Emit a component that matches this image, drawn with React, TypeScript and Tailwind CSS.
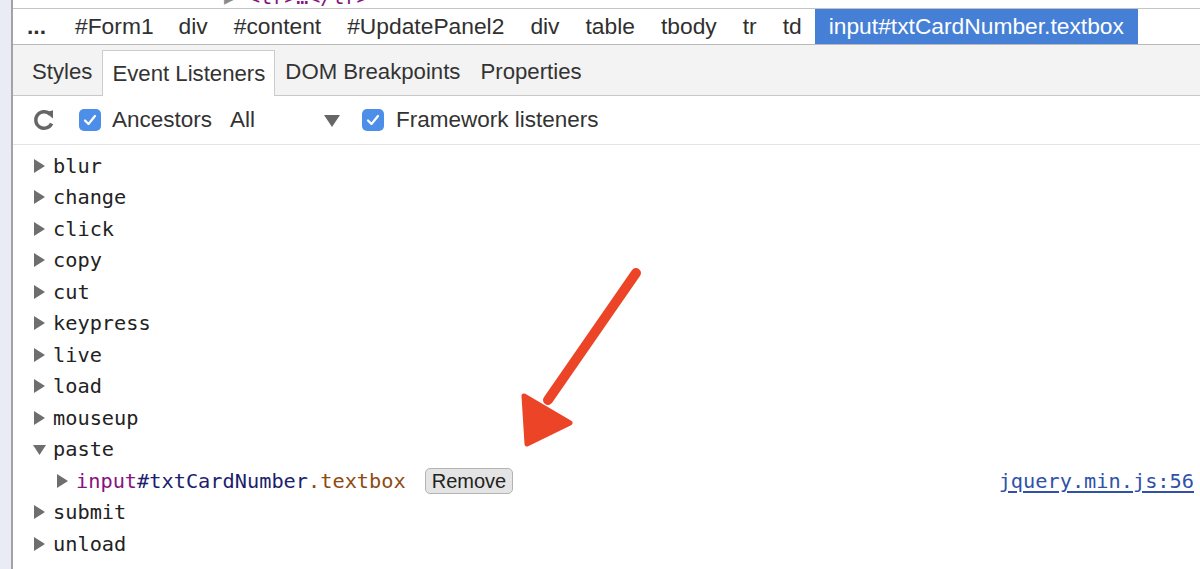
import React from "react";

const sans = { fontFamily: '"Liberation Sans", Arial, sans-serif' };
const mono = { fontFamily: '"DejaVu Sans Mono", "Liberation Mono", monospace' };

const crumbs = ["...", "#Form1", "div", "#content", "#UpdatePanel2", "div", "table", "tbody", "tr", "td"];
const tabs = ["Styles", "Event Listeners", "DOM Breakpoints", "Properties"];
const events = ["blur", "change", "click", "copy", "cut", "keypress", "live", "load", "mouseup"];

const Tri: React.FC<{ open?: boolean }> = ({ open }) => (
  <svg width="13" height="14" viewBox="0 0 13 14" className="shrink-0">
    {open ? (
      <polygon points="0,3 13,3 6.5,13" fill="#6e6e6e" />
    ) : (
      <polygon points="1,0 12,7 1,14" fill="#6e6e6e" />
    )}
  </svg>
);

const Check: React.FC = () => (
  <div className="w-[22px] h-[22px] rounded-[5px] bg-[#4c8ee8] flex items-center justify-center shrink-0">
    <svg width="14" height="12" viewBox="0 0 14 12">
      <path d="M2 6.5 L5.5 10 L12 2" fill="none" stroke="white" strokeWidth="2.2" strokeLinecap="round" strokeLinejoin="round" />
    </svg>
  </div>
);

const EventRow: React.FC<{ name: string; open?: boolean }> = ({ name, open }) => (
  <div className="h-[31.5px] flex items-center pl-[20px] gap-[7px]">
    <Tri open={open} />
    <span>{name}</span>
  </div>
);

const App: React.FC = () => {
  return (
    <div className="w-[1200px] h-[569px] flex bg-white overflow-hidden relative text-[#222]">
      {/* left gutter */}
      <div className="w-[13px] bg-[#e9ebf5] border-r-2 border-[#a3a3a3] shrink-0" />

      <div className="flex-1 flex flex-col min-w-0">
        {/* clipped line of the elements tree above */}
        <div className="h-[9px] overflow-hidden border-b border-[#c4c4c4] bg-white">
          <div className="pl-[211px] -mt-[13px] leading-[20px] text-[20px] whitespace-nowrap" style={mono}>
            <span className="text-[#8a8a8a]">▶ </span>
            <span className="text-[#881280]">&lt;tr&gt;…&lt;/tr&gt;</span>
          </div>
        </div>

        {/* breadcrumbs */}
        <div className="h-[36px] flex items-stretch border-b border-[#b9b9b9] text-[22.8px] text-[#303030] whitespace-nowrap" style={sans}>
          <div className="flex items-center pl-[1px]">
            {crumbs.map((c, i) => (
              <span key={i} className={i === 0 ? "pl-[13px] pr-[16px] font-bold" : i === 1 ? "pl-[13px] pr-[12px]" : "px-[13px]"}>
                {c}
              </span>
            ))}
          </div>
          <div className="bg-[#467fd6] text-white flex items-center px-[14px]">input#txtCardNumber.textbox</div>
        </div>

        {/* sidebar tabs */}
        <div className="h-[51px] bg-[#f3f3f3] border-b border-[#c8c8c8] flex items-end pl-[9px] text-[22.2px] text-[#333]" style={sans}>
          {tabs.map((t) =>
            t === "Event Listeners" ? (
              <div key={t} className="h-[46px] -mb-px bg-white border border-b-0 border-[#cccccc] px-[9px] flex items-center">
                {t}
              </div>
            ) : (
              <div key={t} className="h-[46px] px-[10px] flex items-center">
                {t}
              </div>
            )
          )}
        </div>

        {/* toolbar */}
        <div className="h-[49px] border-b border-[#e4e4e4] flex items-center pl-[19px] text-[22.5px] text-[#333]" style={sans}>
          <svg width="24" height="24" viewBox="0 0 24 24" className="shrink-0">
            <path d="M18.2 6.4 A8.3 8.3 0 1 0 19.6 15.5" fill="none" stroke="#666" strokeWidth="3.4" />
            <polygon points="13.5,4.5 21,2.2 21,10.5" fill="#666" />
          </svg>
          <div className="ml-[23px]">
            <Check />
          </div>
          <span className="ml-[11px]">Ancestors</span>
          <span className="ml-[18px] w-[94px]">All</span>
          <svg width="16" height="13" viewBox="0 0 16 13" className="shrink-0">
            <polygon points="0,1 16,1 8,13" fill="#666" />
          </svg>
          <div className="ml-[22px]">
            <Check />
          </div>
          <span className="ml-[12px]">Framework listeners</span>
        </div>

        {/* listeners */}
        <div className="flex-1 pt-[5px] text-[20.3px] text-[#222]" style={mono}>
          {events.map((e) => (
            <EventRow key={e} name={e} />
          ))}
          <EventRow name="paste" open />
          <div className="h-[31.5px] flex items-center pl-[43px] pr-[6px]">
            <Tri />
            <span className="ml-[7px]">
              <span className="text-[#881280]">input</span>
              <span className="text-[#1d1e6e]">#txtCardNumber</span>
              <span className="text-[#8f4a12]">.textbox</span>
            </span>
            <span
              className="ml-[19px] h-[26px] px-[6px] flex items-center rounded-[5px] bg-[#e4e4e4] border border-[#b3b3b3] text-[20px] text-[#222]"
              style={sans}
            >
              Remove
            </span>
            <span className="ml-auto text-[#2f51aa] underline underline-offset-[3px]">jquery.min.js:56</span>
          </div>
          <EventRow name="submit" />
          <EventRow name="unload" />
        </div>
      </div>

      {/* annotation arrow */}
      <svg className="absolute left-0 top-0 pointer-events-none" width="1200" height="569" viewBox="0 0 1200 569">
        <line x1="636" y1="273" x2="548" y2="400" stroke="#ec4427" strokeWidth="10" strokeLinecap="round" />
        <polygon points="524,396 570,423 527,444" fill="#ec4427" stroke="#ec4427" strokeWidth="5" strokeLinejoin="round" />
      </svg>
    </div>
  );
};

export default App;
